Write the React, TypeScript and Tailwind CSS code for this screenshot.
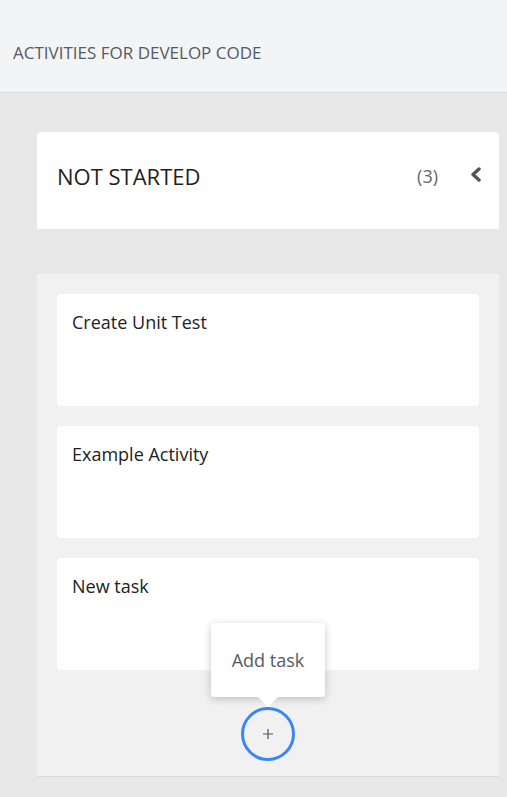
import React from "react";

const tasks = ["Create Unit Test", "Example Activity", "New task"];

export default function App() {
  return (
    <div
      className="min-h-[797px] w-full bg-[#e8e8e8]"
      style={{ fontFamily: '"Open Sans", "Noto Sans", sans-serif' }}
    >
      <div className="h-[93px] border-b border-[#d9d9d9] bg-[#f3f4f6] pl-[13px] pt-[41px]">
        <div className="text-[17px] leading-[24px] text-[#555b63]">
          ACTIVITIES FOR DEVELOP CODE
        </div>
      </div>

      <div className="pl-[37px] pr-[8px] pt-[39px]">
        <div className="flex h-[97px] items-center rounded-t-[4px] bg-white pl-[20px] pr-[17px] pb-[10px]">
          <div className="flex-1 text-[22px] leading-[30px] text-[#1f1f1f]">NOT STARTED</div>
          <div className="text-[18px] leading-[26px] text-[#666]">(3)</div>
          <svg width="13" height="15" viewBox="0 0 13 15" className="ml-[31px] mb-[2px]">
            <polyline
              points="10,2 4,7.5 10,13"
              fill="none"
              stroke="#555"
              strokeWidth="3.4"
              strokeLinecap="round"
              strokeLinejoin="round"
            />
          </svg>
        </div>

        <div className="mt-[45px] flex flex-col border-b border-[#dcdcdc] bg-[#f1f1f1] px-[20px] pt-[20px] pb-[15px]">
          <div className="flex flex-col gap-[20px]">
            {tasks.map((t) => (
              <div key={t} className="h-[112px] rounded-[4px] bg-white px-[15px] pt-[15px]">
                <div className="text-[18px] leading-[27px] text-[#222]">{t}</div>
              </div>
            ))}
          </div>
          <div className="relative mt-[37px] flex justify-center">
            <div className="absolute bottom-[64px] left-1/2 -translate-x-1/2">
              <div className="relative flex h-[74px] w-[114px] items-center justify-center rounded-[3px] bg-white shadow-[0_2px_8px_rgba(0,0,0,0.22)]">
                <span className="text-[18px] leading-[26px] text-[#555b63]">Add task</span>
                <div className="absolute left-1/2 top-full h-0 w-0 -translate-x-1/2 border-x-[10px] border-t-[10px] border-x-transparent border-t-white" />
              </div>
            </div>
            <button className="flex h-[54px] w-[54px] items-center justify-center rounded-full border-[3px] border-[#3a86f5] bg-transparent">
              <svg width="12" height="12" viewBox="0 0 12 12">
                <path d="M6 1v10M1 6h10" stroke="#555" strokeWidth="1.2" />
              </svg>
            </button>
          </div>
        </div>
      </div>
    </div>
  );
}
